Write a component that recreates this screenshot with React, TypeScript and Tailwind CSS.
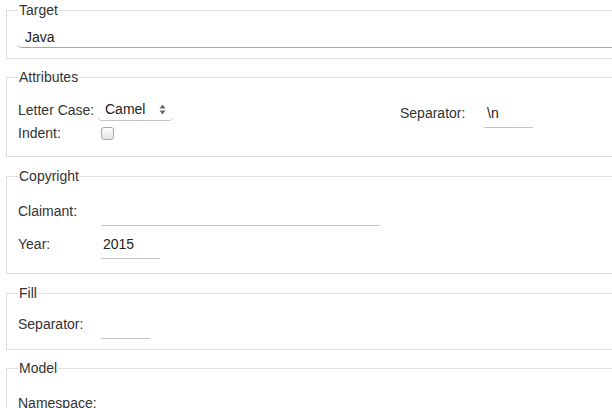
import React from "react";

const font = { fontFamily: '"Liberation Sans", Arial, sans-serif' };

function Legend({ children }: { children: React.ReactNode }) {
  return (
    <legend className="px-[1px] text-[14px] leading-[20px] text-[#333]">{children}</legend>
  );
}

function Underline({ w, value, pl = "pl-[2px]" }: { w: string; value?: string; pl?: string }) {
  return (
    <div className={`${w} h-[29px] border-b border-[#c4c4c4] flex items-center ${pl} text-[14px] text-[#222]`}>
      {value}
    </div>
  );
}

export default function App() {
  return (
    <div className="w-[612px] h-[408px] overflow-hidden bg-white text-[14px] text-[#333]" style={font}>
      <div className="w-[660px] pl-[6px]">
        {/* Target */}
        <fieldset className="border border-[#dddddd] pl-[11px] pt-[6px] pb-[10px]">
          <Legend>Target</Legend>
          <div className="ml-[-1px] h-[22px] border-b border-[#a8a8a8] rounded-[5px] flex items-center pl-[8px] pt-[1px] text-[#222]">
            Java
          </div>
        </fieldset>

        {/* Attributes */}
        <fieldset className="mt-[8px] border border-[#dddddd] pl-[11px] pt-[12px] pb-[13px]">
          <Legend>Attributes</Legend>
          <div className="flex items-start">
            <div className="w-[382px] flex flex-col">
              <div className="h-[22px] flex items-center">
                <span className="w-[79px]">Letter Case:</span>
                <div className="w-[77px] h-[22px] border-b border-[#c4c4c4] rounded-[5px] flex items-center pl-[8px] pr-[8px] justify-between text-[#222]">
                  <span>Camel</span>
                  <svg width="7" height="11" viewBox="0 0 7 11">
                    <path d="M3.5 0.5 L6.5 4.5 L0.5 4.5 Z" fill="#666" />
                    <path d="M3.5 10.5 L6.5 6.5 L0.5 6.5 Z" fill="#666" />
                  </svg>
                </div>
              </div>
              <div className="mt-[2px] h-[20px] flex items-center">
                <span className="w-[83px]">Indent:</span>
                <div className="mt-[1px] w-[13px] h-[13px] rounded-[3px] border border-[#a9a9a9] bg-gradient-to-b from-[#fdfdfd] to-[#e4e4e4]" />
              </div>
            </div>
            <div className="h-[29px] flex items-center">
              <span className="w-[84px]">Separator:</span>
              <Underline w="w-[49px]" value="\n" pl="pl-[3px]" />
            </div>
          </div>
        </fieldset>

        {/* Copyright */}
        <fieldset className="mt-[9px] border border-[#dddddd] pl-[11px] pt-[11px] pb-[14px]">
          <Legend>Copyright</Legend>
          <div className="h-[29px] flex items-center">
            <span className="w-[83px]">Claimant:</span>
            <Underline w="w-[279px]" />
          </div>
          <div className="mt-[4px] h-[29px] flex items-center">
            <span className="w-[83px]">Year:</span>
            <Underline w="w-[59px]" value="2015" />
          </div>
        </fieldset>

        {/* Fill */}
        <fieldset className="mt-[9px] border border-[#dddddd] pl-[11px] pt-[7px] pb-[10px]">
          <Legend>Fill</Legend>
          <div className="h-[29px] flex items-center">
            <span className="w-[83px]">Separator:</span>
            <Underline w="w-[49px]" />
          </div>
        </fieldset>

        {/* Model */}
        <fieldset className="mt-[8px] border border-[#dddddd] pl-[11px] pt-[11px] pb-[14px]">
          <Legend>Model</Legend>
          <div className="h-[29px] flex items-center">
            <span className="w-[83px]">Namespace:</span>
            <Underline w="w-[279px]" />
          </div>
        </fieldset>
      </div>
    </div>
  );
}
